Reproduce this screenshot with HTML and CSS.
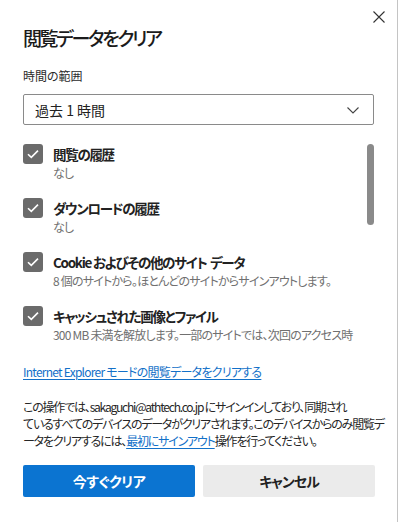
FILE: index.html
```html
<!DOCTYPE html>
<html lang="ja">
<head>
<meta charset="utf-8">
<title>閲覧データをクリア</title>
<link rel="stylesheet" href="styles.css">
</head>
<body>
<div class="dialog">
  <button class="close" aria-label="閉じる">
    <svg width="12" height="12" viewBox="0 0 12 12"><path d="M0.5 0.5L11.5 11.5M11.5 0.5L0.5 11.5" stroke="#333" stroke-width="1.1" fill="none"/></svg>
  </button>
  <h1 class="title">閲覧データをクリア</h1>
  <div class="label">時間の範囲</div>
  <div class="select">
    <span>過去 1 時間</span>
    <svg class="chev" width="12" height="7" viewBox="0 0 12 7"><path d="M0.5 0.5L6 6L11.5 0.5" stroke="#444" stroke-width="1.1" fill="none"/></svg>
  </div>
  <div class="list">
    <div class="item">
      <span class="check"><svg width="12" height="10" viewBox="0 0 12 10"><path d="M1 5.2L4.3 8.4L11 1.6" stroke="#fff" stroke-width="1.6" fill="none"/></svg></span>
      <div class="txt"><div class="name">閲覧の履歴</div><div class="sub">なし</div></div>
    </div>
    <div class="item">
      <span class="check"><svg width="12" height="10" viewBox="0 0 12 10"><path d="M1 5.2L4.3 8.4L11 1.6" stroke="#fff" stroke-width="1.6" fill="none"/></svg></span>
      <div class="txt"><div class="name">ダウンロードの履歴</div><div class="sub">なし</div></div>
    </div>
    <div class="item">
      <span class="check"><svg width="12" height="10" viewBox="0 0 12 10"><path d="M1 5.2L4.3 8.4L11 1.6" stroke="#fff" stroke-width="1.6" fill="none"/></svg></span>
      <div class="txt"><div class="name">Cookie およびその他のサイト&nbsp; データ</div><div class="sub">8 個のサイトから。ほとんどのサイトからサインアウトします。</div></div>
    </div>
    <div class="item">
      <span class="check"><svg width="12" height="10" viewBox="0 0 12 10"><path d="M1 5.2L4.3 8.4L11 1.6" stroke="#fff" stroke-width="1.6" fill="none"/></svg></span>
      <div class="txt"><div class="name">キャッシュされた画像とファイル</div><div class="sub">300 MB 未満を解放します。一部のサイトでは、次回のアクセス時</div></div>
    </div>
    <div class="scrollbar"></div>
  </div>
  <a class="ielink" href="#">Internet Explorer モードの閲覧データをクリアする</a>
  <p class="note">この操作では、sakaguchi@athtech.co.jp にサインインしており、同期され<br>ているすべてのデバイスのデータがクリアされます。このデバイスからのみ閲覧デ<br>ータをクリアするには、<a href="#">最初にサインアウト</a>操作を行ってください。</p>
  <div class="buttons">
    <button class="btn primary">今すぐクリア</button>
    <button class="btn secondary">キャンセル</button>
  </div>
</div>
</body>
</html>
```
FILE: styles.css
```css
* { box-sizing: border-box; }
html, body { margin: 0; padding: 0; background: #fff; }
body {
  font-family: "Noto Sans CJK JP", "Noto Sans", sans-serif;
  font-feature-settings: "palt";
  color: #1f1f1f;
}
.dialog {
  position: relative;
  width: 398px;
  height: 522px;
  border-right: 1px solid #c4c4c4;
  padding: 0 0 0 23px;
  display: flex;
  flex-direction: column;
  align-items: flex-start;
  overflow: hidden;
}
.close {
  position: absolute;
  left: 373px;
  top: 11px;
  width: 12px;
  height: 12px;
  padding: 0;
  border: 0;
  background: none;
  display: flex;
}
.title {
  margin: 24px 0 0;
  font-size: 19px;
  line-height: 28px;
  font-weight: 500;
  letter-spacing: -2.4px;
  color: #1b1b1b;
}
.label {
  margin-top: 15px;
  font-size: 12px;
  line-height: 18px;
  color: #2b2b2b;
}
.select {
  margin-top: 9px;
  width: 351px;
  height: 31px;
  border: 1px solid #8a8a8a;
  border-radius: 2px;
  display: flex;
  align-items: center;
  justify-content: space-between;
  padding: 0 14px 0 11px;
  font-size: 14px;
  color: #222;
}
.chev { margin-top: 2px; }
.list {
  position: relative;
  width: 352px;
  height: 220px;
  padding-top: 19px;
  overflow: hidden;
  display: flex;
  flex-direction: column;
}
.item {
  display: flex;
  gap: 10px;
  height: 54px;
  flex: none;
}
.check {
  flex: none;
  width: 20px;
  height: 20px;
  border-radius: 3px;
  background: #6b6b6b;
  display: flex;
  align-items: center;
  justify-content: center;
}
.txt { width: 310px; }
.name {
  font-size: 13.5px;
  line-height: 20px;
  font-weight: 700;
  letter-spacing: -1.3px;
  color: #222;
  white-space: nowrap;
}
.sub {
  font-size: 12px;
  line-height: 18px;
  letter-spacing: -0.8px;
  color: #707070;
  white-space: nowrap;
}
.scrollbar {
  position: absolute;
  left: 344px;
  top: 19px;
  width: 7px;
  height: 81px;
  border-radius: 4px;
  background: #8a8a8a;
}
.ielink {
  margin-top: 18px;
  font-size: 12px;
  line-height: 18px;
  letter-spacing: -0.75px;
  color: #1270c8;
  text-decoration: underline;
  text-underline-offset: 2px;
}
.note {
  margin: 17px 0 0;
  font-size: 12px;
  line-height: 17px;
  letter-spacing: -1.2px;
  color: #262626;
  white-space: nowrap;
}
.note a { color: #1270c8; text-decoration: underline; text-underline-offset: 2px; }
.buttons {
  margin-top: 16px;
  display: flex;
  gap: 8px;
}
.btn {
  width: 172px;
  height: 32px;
  border: 0;
  border-radius: 2px;
  font-family: inherit;
  font-feature-settings: "palt";
  font-size: 14px;
  font-weight: 700;
}
.primary { background: #0b74d1; color: #fff; letter-spacing: -0.5px; }
.secondary { background: #ebebeb; color: #222; letter-spacing: -1px; }
```
